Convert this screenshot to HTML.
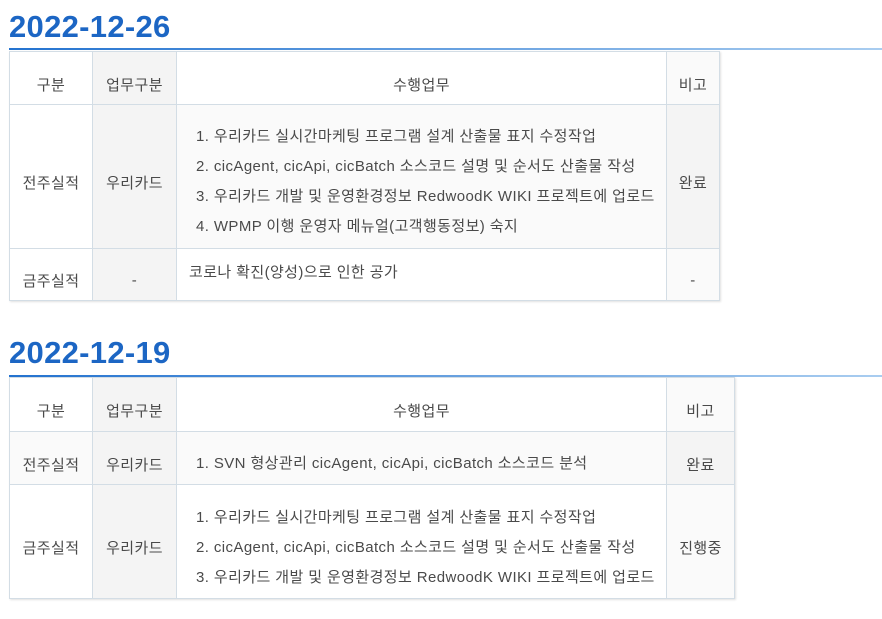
<!DOCTYPE html>
<html><head><meta charset="utf-8"><style>
body{margin:0;width:882px;height:619px;background:#fff;position:relative;overflow:hidden;font-family:"Liberation Sans","Noto Sans CJK KR",sans-serif;color:#4a4a4a;font-size:15px;letter-spacing:0.4px}
.h{position:absolute;left:9px;font-size:31px;font-weight:bold;color:#1c66c4;letter-spacing:0.3px;line-height:36px;font-family:"Liberation Sans",sans-serif}
.ln{position:absolute;left:9px;width:873px;height:2px;background:linear-gradient(90deg,#2473d0,#a9cdf0)}
.c{position:absolute;box-sizing:border-box;border:1px solid #d3dde5;display:flex;align-items:center;justify-content:center;padding-top:12px;white-space:nowrap}
.g{background:#f4f4f4}.l{background:#fafafa}
.t{position:absolute;white-space:nowrap;line-height:20px}
.sh{position:absolute;box-shadow:1px 1px 2px rgba(0,0,0,.12)}
</style></head><body>
<div class="h" style="top:9px">2022-12-26</div>
<div class="ln" style="top:48px"></div>
<div class="sh" style="left:9px;top:51px;width:711px;height:250px"></div>
<div class="c" style="left:9px;top:51px;width:84px;height:54px;background:#fff">구분</div>
<div class="c g" style="left:92px;top:51px;width:85px;height:54px">업무구분</div>
<div class="c" style="left:176px;top:51px;width:491px;height:54px;background:#fff">수행업무</div>
<div class="c l" style="left:666px;top:51px;width:54px;height:54px">비고</div>
<div class="c" style="left:9px;top:104px;width:84px;height:145px;background:#fff">전주실적</div>
<div class="c g" style="left:92px;top:104px;width:85px;height:145px">우리카드</div>
<div class="c l" style="left:176px;top:104px;width:491px;height:145px"></div>
<div class="c g" style="left:666px;top:104px;width:54px;height:145px">완료</div>
<div class="c" style="left:9px;top:248px;width:84px;height:53px;background:#fff">금주실적</div>
<div class="c g" style="left:92px;top:248px;width:85px;height:53px">-</div>
<div class="c" style="left:176px;top:248px;width:491px;height:53px;background:#fff"></div>
<div class="c l" style="left:666px;top:248px;width:54px;height:53px">-</div>
<div class="t" style="left:196px;top:127px">1. 우리카드 실시간마케팅 프로그램 설계 산출물 표지 수정작업</div>
<div class="t" style="left:196px;top:157px">2. cicAgent, cicApi, cicBatch 소스코드 설명 및 순서도 산출물 작성</div>
<div class="t" style="left:196px;top:187px">3. 우리카드 개발 및 운영환경정보 RedwoodK WIKI 프로젝트에 업로드</div>
<div class="t" style="left:196px;top:217px">4. WPMP 이행 운영자 메뉴얼(고객행동정보) 숙지</div>
<div class="t" style="left:189px;top:263px">코로나 확진(양성)으로 인한 공가</div>

<div class="h" style="top:335px">2022-12-19</div>
<div class="ln" style="top:375px"></div>
<div class="sh" style="left:9px;top:377px;width:726px;height:222px"></div>
<div class="c" style="left:9px;top:377px;width:84px;height:55px;background:#fff">구분</div>
<div class="c g" style="left:92px;top:377px;width:85px;height:55px">업무구분</div>
<div class="c" style="left:176px;top:377px;width:491px;height:55px;background:#fff">수행업무</div>
<div class="c l" style="left:666px;top:377px;width:69px;height:55px">비고</div>
<div class="c l" style="left:9px;top:431px;width:84px;height:54px">전주실적</div>
<div class="c g" style="left:92px;top:431px;width:85px;height:54px">우리카드</div>
<div class="c l" style="left:176px;top:431px;width:491px;height:54px"></div>
<div class="c g" style="left:666px;top:431px;width:69px;height:54px">완료</div>
<div class="c" style="left:9px;top:484px;width:84px;height:115px;background:#fff">금주실적</div>
<div class="c g" style="left:92px;top:484px;width:85px;height:115px">우리카드</div>
<div class="c" style="left:176px;top:484px;width:491px;height:115px;background:#fff"></div>
<div class="c l" style="left:666px;top:484px;width:69px;height:115px">진행중</div>
<div class="t" style="left:196px;top:454px">1. SVN 형상관리 cicAgent, cicApi, cicBatch 소스코드 분석</div>
<div class="t" style="left:196px;top:508px">1. 우리카드 실시간마케팅 프로그램 설계 산출물 표지 수정작업</div>
<div class="t" style="left:196px;top:538px">2. cicAgent, cicApi, cicBatch 소스코드 설명 및 순서도 산출물 작성</div>
<div class="t" style="left:196px;top:568px">3. 우리카드 개발 및 운영환경정보 RedwoodK WIKI 프로젝트에 업로드</div>
</body></html>
